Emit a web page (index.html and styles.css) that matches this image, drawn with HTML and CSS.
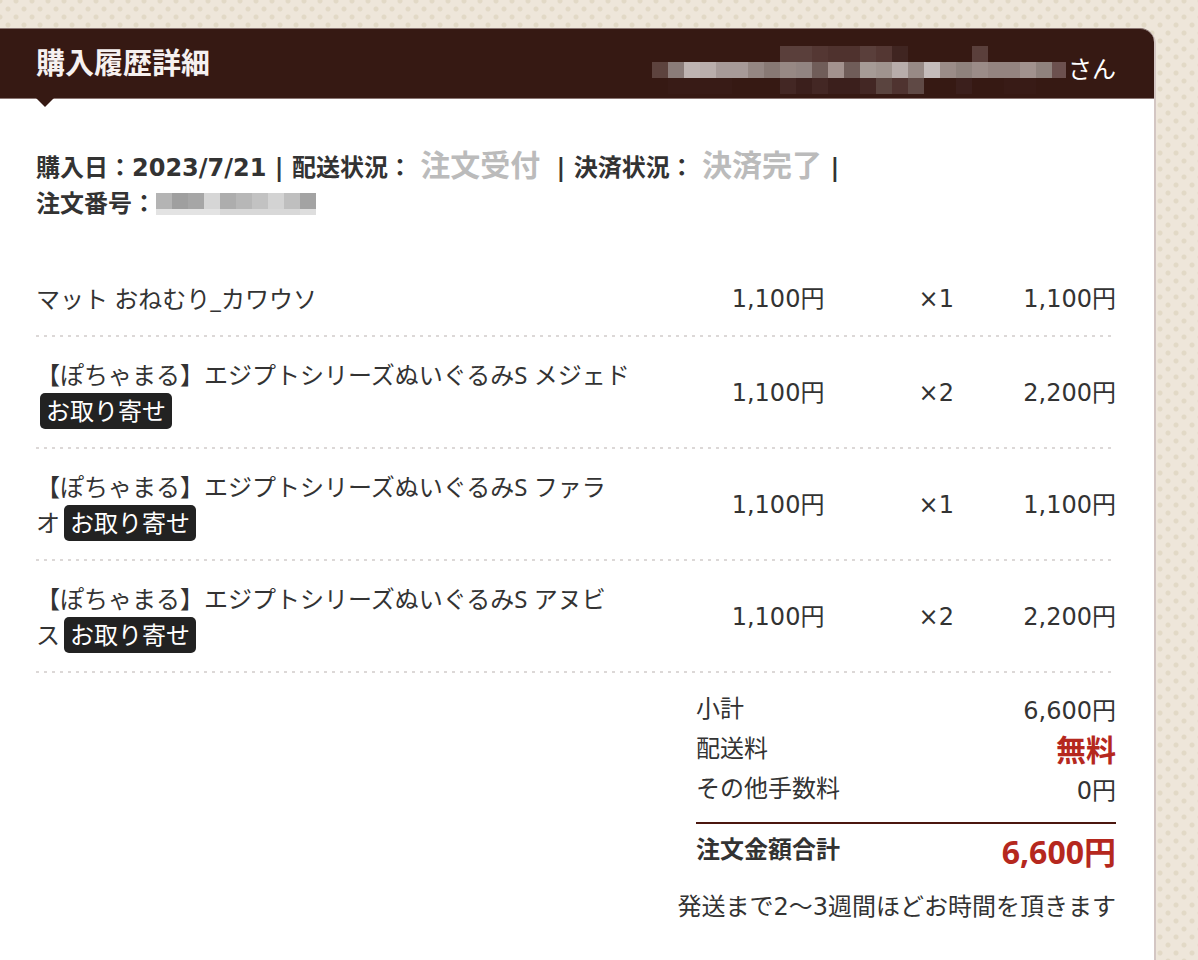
FILE: index.html
```
<!DOCTYPE html>
<html lang="ja">
<head>
    <meta charset="UTF-8">
    <title>購入履歴詳細</title>
    <meta name="viewport" content="width=device-width, initial-scale=1.0">
    <link rel="stylesheet" href="styles.css">
</head>
<body>
    <main class="panel">
        <header class="panel-header">
            <h1 class="title">購入履歴詳細</h1>
            <p class="user">
                <svg class="mask" width="414" height="48" viewBox="0 0 414 48" shape-rendering="crispEdges" aria-hidden="true">
                    <path fill="#5a3f3b" d="M128 0h32v16h-32zM208 0h16v16h-16zM320 0h16v16h-16z"/>
                    <path fill="#543733" d="M160 0h16v16h-16zM224 0h16v16h-16z"/>
                    <path fill="#4f322e" d="M176 0h32v16h-32z"/>
                    <path fill="#402521" d="M240 0h16v16h-16z"/>
                    <path fill="#5d433e" d="M0 16h16v16H0z"/>
                    <path fill="#8b7c79" d="M16 16h16v16H16z"/>
                    <path fill="#bfb4b2" d="M32 16h16v16H32z"/>
                    <path fill="#baaeac" d="M48 16h16v16H48z"/>
                    <path fill="#a79a98" d="M64 16h32v16H64z"/>
                    <path fill="#958783" d="M96 16h16v16H96z"/>
                    <path fill="#887974" d="M112 16h16v16h-16z"/>
                    <path fill="#978884" d="M128 16h16v16h-16z"/>
                    <path fill="#928481" d="M144 16h16v16h-16z"/>
                    <path fill="#705d59" d="M160 16h16v16h-16zM192 16h16v16h-16z"/>
                    <path fill="#a3928e" d="M176 16h16v16h-16z"/>
                    <path fill="#a69b96" d="M208 16h16v16h-16z"/>
                    <path fill="#a0948f" d="M224 16h16v16h-16z"/>
                    <path fill="#b8adab" d="M240 16h16v16h-16z"/>
                    <path fill="#988a86" d="M256 16h16v16h-16z"/>
                    <path fill="#c5bcbb" d="M272 16h16v16h-16z"/>
                    <path fill="#9b8c88" d="M288 16h16v16h-16zM320 16h16v16h-16z"/>
                    <path fill="#8f827d" d="M304 16h16v16h-16zM384 16h16v16h-16z"/>
                    <path fill="#948480" d="M336 16h32v16h-32z"/>
                    <path fill="#a1928e" d="M368 16h16v16h-16z"/>
                    <path fill="#6c514f" d="M400 16h14v16h-14z"/>
                    <path fill="#381b16" d="M16 32h64v16H16zM352 32h32v16h-32z"/>
                    <path fill="#3b1f1c" d="M144 32h16v16h-16zM176 32h32v16h-32zM304 32h16v16h-16z"/>
                    <path fill="#432724" d="M128 32h16v16h-16zM160 32h16v16h-16zM208 32h16v16h-16z"/>
                    <path fill="#5a443f" d="M224 32h16v16h-16z"/>
                    <path fill="#4f3330" d="M240 32h16v16h-16z"/>
                    <path fill="#5f4945" d="M256 32h16v16h-16z"/>
                </svg>
                <span>さん</span>
            </p>
        </header>

        <div class="content">
            <div class="order-info">
                <p>購入日：2023/7/21 | 配送状況： <span class="status status-ship">注文受付</span> | 決済状況： <span class="status">決済完了</span> |</p>
                <p class="order-number">
                    <span>注文番号：</span>
                    <svg width="160" height="22" viewBox="0 0 160 22" shape-rendering="crispEdges" aria-hidden="true">
                        <path fill="#b4b4b4" d="M0 0h16v16H0z"/>
                        <path fill="#9f9f9f" d="M16 0h16v16H16z"/>
                        <path fill="#a6a6a6" d="M32 0h16v16H32z"/>
                        <path fill="#d6d6d6" d="M48 0h16v16H48z"/>
                        <path fill="#adadad" d="M64 0h16v16H64z"/>
                        <path fill="#b7b7b7" d="M80 0h16v16H80z"/>
                        <path fill="#c2c2c2" d="M96 0h16v16H96z"/>
                        <path fill="#d3d3d3" d="M112 0h16v16h-16z"/>
                        <path fill="#bfbfbf" d="M128 0h16v16h-16z"/>
                        <path fill="#a3a3a3" d="M144 0h16v16h-16z"/>
                        <path fill="#e3e3e3" d="M0 16h64v6H0z"/>
                        <path fill="#d8d8d8" d="M64 16h80v6H64z"/>
                        <path fill="#dedede" d="M144 16h16v6h-16z"/>
                    </svg>
                </p>
            </div>

            <table class="items">
                <tbody>
                    <tr>
                        <td class="name">マット おねむり_カワウソ</td>
                        <td class="price">1,100円</td>
                        <td class="qty">×1</td>
                        <td class="total">1,100円</td>
                    </tr>
                    <tr>
                        <td class="name">【ぽちゃまる】エジプトシリーズぬいぐるみS メジェド<span class="badge">お取り寄せ</span></td>
                        <td class="price">1,100円</td>
                        <td class="qty">×2</td>
                        <td class="total">2,200円</td>
                    </tr>
                    <tr>
                        <td class="name">【ぽちゃまる】エジプトシリーズぬいぐるみS ファラ<span class="keep">オ<span class="badge">お取り寄せ</span></span></td>
                        <td class="price">1,100円</td>
                        <td class="qty">×1</td>
                        <td class="total">1,100円</td>
                    </tr>
                    <tr>
                        <td class="name">【ぽちゃまる】エジプトシリーズぬいぐるみS アヌビ<span class="keep">ス<span class="badge">お取り寄せ</span></span></td>
                        <td class="price">1,100円</td>
                        <td class="qty">×2</td>
                        <td class="total">2,200円</td>
                    </tr>
                </tbody>
            </table>

            <table class="summary">
                <tbody>
                    <tr>
                        <th scope="row">小計</th>
                        <td>6,600円</td>
                    </tr>
                    <tr>
                        <th scope="row">配送料</th>
                        <td><strong class="free">無料</strong></td>
                    </tr>
                    <tr>
                        <th scope="row">その他手数料</th>
                        <td>0円</td>
                    </tr>
                </tbody>
                <tfoot>
                    <tr>
                        <th scope="row">注文金額合計</th>
                        <td>6,600円</td>
                    </tr>
                </tfoot>
            </table>

            <p class="note">発送まで2〜3週間ほどお時間を頂きます</p>
        </div>
    </main>
</body>
</html>
```
FILE: styles.css
```
:root {
    --brown: #361913;
    --red: #b5281e;
    --text-color: #333;
    --dot: #e2d9c6;
}

* {
    margin: 0;
    padding: 0;
    box-sizing: border-box;
}

body {
    font-family: 'DejaVu Sans', 'Noto Sans CJK JP', sans-serif;
    font-size: 24px;
    line-height: 36px;
    color: var(--text-color);
    background-color: #eee6da;
    background-image:
        radial-gradient(circle at 8px 8px, var(--dot) 2px, transparent 3px),
        radial-gradient(circle at 8px 8px, var(--dot) 2px, transparent 3px);
    background-size: 16px 16px;
    background-position: -8px -7px, 0 1px;
    padding: 28px 42px 0 0;
}

.panel {
    min-height: calc(100vh - 28px);
    background: #fff;
    border-right: 2px solid #d3c6c3;
    border-top-right-radius: 16px;
}

.panel-header {
    position: relative;
    display: flex;
    justify-content: space-between;
    align-items: flex-start;
    height: 71px;
    padding: 0 38px 0 36px;
    background: var(--brown);
    border-top: 1px solid #8a7673;
    border-bottom: 1px solid #8a7673;
    border-top-right-radius: 14px;
}

/* small triangle under the title */
.panel-header::after {
    content: '';
    position: absolute;
    top: 100%;
    left: 36px;
    border: 9px solid transparent;
    border-top-color: var(--brown);
    border-bottom: 0;
}

.title {
    padding-top: 17px;
    font-size: 29px;
    font-weight: 700;
    color: #f6f1f0;
}

.user {
    display: flex;
    align-items: center;
    gap: 2px;
    padding-top: 17px;
    color: #fff;
}

.content {
    padding: 49px 38px 36px 36px;
}

.order-info {
    margin-bottom: 39px;
    font-weight: 700;
}

.order-number {
    display: flex;
    align-items: center;
}

.status {
    font-size: 30px;
    color: #bbb;
}

.status-ship {
    margin-right: 8px;
}

.items {
    width: 100%;
    border-collapse: collapse;
}

.items tr {
    background: repeating-linear-gradient(to right, #dcd8d7 0 3px, transparent 3px 8px) left bottom / 100% 2px no-repeat;
}

.items td {
    padding: 20px 0;
    text-align: right;
}

.items .name {
    width: 56%;
    font-family: 'Noto Sans', 'Noto Sans CJK JP', sans-serif;
    text-align: left;
}

.items .qty {
    width: 12%;
}

.items .total {
    width: 15%;
}

.keep {
    white-space: nowrap;
}

.badge {
    display: inline-block;
    margin-left: 4px;
    padding: 0 6px;
    color: #fff;
    background: #222;
    border-radius: 5px;
    vertical-align: top;
}

.summary {
    width: 420px;
    margin: 18px 0 0 auto;
    border-collapse: collapse;
}

.summary th {
    font-weight: 400;
    text-align: left;
}

.summary td {
    padding-top: 2px;
    text-align: right;
}

.summary tr {
    height: 40px;
    vertical-align: top;
}

.summary tbody tr:last-child {
    height: 52px;
}

.summary tfoot {
    border-top: 2px solid #4b170f;
}

.summary tfoot tr {
    height: 56px;
}

.summary tfoot th {
    padding-top: 8px;
    font-weight: 700;
}

.summary tfoot td {
    padding-top: 10px;
    font-family: 'Noto Sans', 'Noto Sans CJK JP', sans-serif;
    font-size: 32px;
    font-weight: 700;
    color: var(--red);
}

.free {
    font-size: 30px;
    color: var(--red);
}

.note {
    margin-top: 10px;
    text-align: right;
}
```
